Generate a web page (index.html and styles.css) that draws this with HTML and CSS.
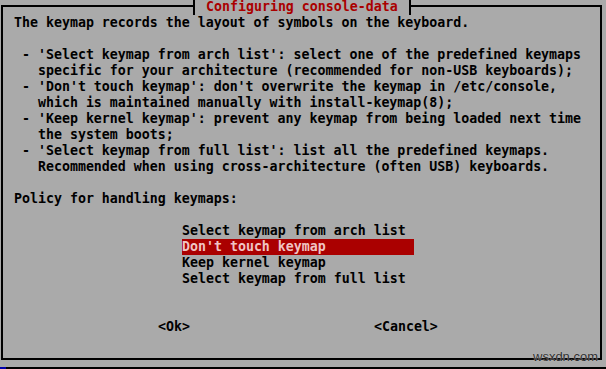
FILE: index.html
```html
<!DOCTYPE html>
<html>
<head>
<meta charset="utf-8">
<link rel="stylesheet" href="styles.css">
</head>
<body>
<div class="screen">
  <div class="frame">
    <div class="line">The keymap records the layout of symbols on the keyboard.</div>
    <div class="line"> </div>
    <div class="line"> - 'Select keymap from arch list': select one of the predefined keymaps</div>
    <div class="line">   specific for your architecture (recommended for non-USB keyboards);</div>
    <div class="line"> - 'Don't touch keymap': don't overwrite the keymap in /etc/console,</div>
    <div class="line">   which is maintained manually with install-keymap(8);</div>
    <div class="line"> - 'Keep kernel keymap': prevent any keymap from being loaded next time</div>
    <div class="line">   the system boots;</div>
    <div class="line"> - 'Select keymap from full list': list all the predefined keymaps.</div>
    <div class="line">   Recommended when using cross-architecture (often USB) keyboards.</div>
    <div class="line"> </div>
    <div class="line">Policy for handling keymaps:</div>
    <div class="line"> </div>
    <div class="menu">
      <div class="line item">Select keymap from arch list</div>
      <div class="line item sel">Don't touch keymap</div>
      <div class="line item">Keep kernel keymap</div>
      <div class="line item">Select keymap from full list</div>
    </div>
    <div class="line"> </div>
    <div class="line"> </div>
    <div class="line buttons">
      <span class="btn btn-ok">&lt;Ok&gt;</span>
      <span class="btn btn-cancel">&lt;Cancel&gt;</span>
    </div>
  </div>
  <div class="floor">
    <div class="floor-bg"></div>
    <div class="floor-shadow"></div>
  </div>
  <div class="title">Configuring console-data</div>
  <div class="watermark">wsxdn.com</div>
</div>
</body>
</html>
```

FILE: styles.css
```css
html, body {
  margin: 0;
  padding: 0;
  background: #aaaaaa;
}

.screen {
  position: relative;
  width: 606px;
  height: 369px;
  overflow: hidden;
  background: #aaaaaa;
  display: flex;
  flex-direction: column;
  font-family: "DejaVu Sans Mono", "Liberation Mono", monospace;
  font-size: 13.288px;
  font-weight: bold;
  color: #000000;
}

.frame {
  flex-shrink: 0;
  box-sizing: border-box;
  margin: 5px 0 0 1px;
  width: 601px;
  height: 355px;
  border: 2px solid #000000;
  padding: 8px 0 0 11px;
}

.line {
  height: 16px;
  line-height: 16px;
  white-space: pre;
}

.menu {
  margin-left: 168px;
  width: 232px;
}

.item.sel {
  background: #aa0000;
  color: #f0c4c4;
}

.buttons {
  display: flex;
}

.btn-ok {
  margin-left: 144px;
}

.btn-cancel {
  margin-left: 184px;
}

.floor {
  flex-shrink: 0;
  display: flex;
  height: 16px;
  margin-top: 7px;
}

.floor-bg {
  width: 6px;
  background: #0000aa;
}

.floor-shadow {
  flex: 1;
  background: #000000;
}

.title {
  position: absolute;
  left: 193px;
  top: -1px;
  height: 16px;
  line-height: 16px;
  padding: 0 11px;
  border-left: 2px solid #000000;
  border-right: 2px solid #000000;
  background: #aaaaaa;
  color: #aa0000;
  white-space: pre;
}

.watermark {
  position: absolute;
  left: 533px;
  top: 350px;
  font-family: "Liberation Sans", Arial, sans-serif;
  font-size: 13px;
  font-weight: normal;
  line-height: 14px;
  color: #2e2e2e;
  text-shadow: 0 0 1px #d0d0d0;
}
```
